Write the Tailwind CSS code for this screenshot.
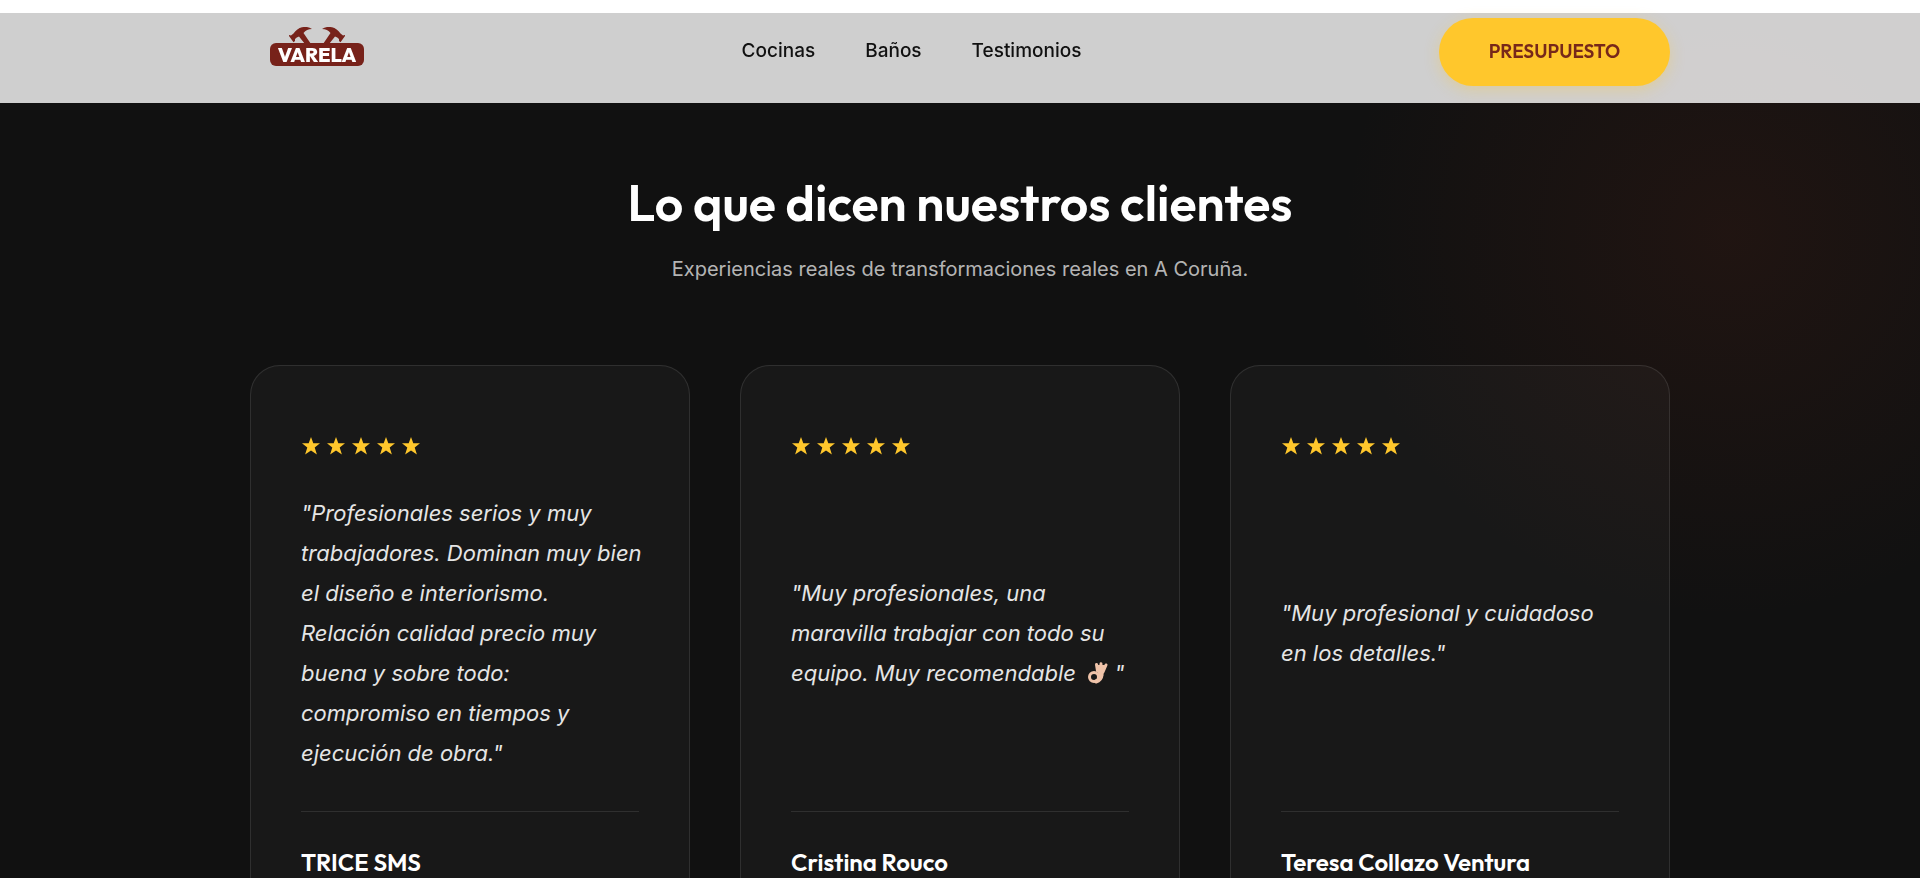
<!DOCTYPE html>
<html lang="es">
<head>
    <meta charset="UTF-8">
    <meta name="viewport" content="width=device-width, initial-scale=1.0">
    <title>Varela | Testimonios</title>
    <script src="https://cdn.jsdelivr.net/npm/@tailwindcss/browser@4"></script>
</head>
<body class="bg-white font-['Inter',sans-serif] text-[#111]">
    <!-- Shared shapes -->
    <svg class="hidden" aria-hidden="true">
        <symbol id="star" viewBox="0 0 18 18">
            <path d="M9 0l2.300 6.300H18l-5.300 4.200 2.200 7L9 13.400l-5.900 4.100 2.200-7L0 6.300h6.700z" fill="#ffc72c"/>
        </symbol>
    </svg>

    <header class="fixed inset-x-0 top-0 z-10 bg-white/80">
        <div class="mx-auto flex h-[103px] max-w-[1500px] items-center justify-between px-10">
            <a href="#" class="flex w-[134px] justify-center pb-2.5" aria-label="Varela">
                <svg class="h-[40px] w-[94px]" viewBox="0 0 94 40">
                    <g fill="#77221a">
                        <path d="M19 8 L21 8.500 L23.500 6.500 Q27 1.500 32 0.300 Q38 -1 42 2 Q36.500 2 33.500 6 L41 17 H35 L29 9.500 Q26.500 10 25 12 L25 14 L23.500 15.200 L19 9z"/>
                        <path d="M75 8 L73 8.500 L70.500 6.500 Q67 1.500 62 0.300 Q56 -1 52 2 Q57.500 2 60.500 6 L53 17 H59 L65 9.500 Q67.500 10 69 12 L69 14 L70.500 15.200 L75 9z"/>
                        <rect x="0" y="16" width="94" height="23" rx="6"/>
                    </g>
                    <text x="47" y="34.500" text-anchor="middle" font-family="Outfit, sans-serif" font-weight="800" font-size="20" fill="#fff">VARELA</text>
                </svg>
            </a>
            <nav class="flex gap-[50px] text-[19px] font-medium">
                <a href="#cocinas">Cocinas</a>
                <a href="#banos">Baños</a>
                <a href="#testimonios">Testimonios</a>
            </nav>
            <a href="#presupuesto" class="flex h-[68px] w-[231px] items-center justify-center rounded-full bg-[#ffc72c] font-['Outfit','Lato',sans-serif] text-[19px] font-semibold text-[#77281a] shadow-[0_4px_15px_rgba(255,199,44,0.3)]">PRESUPUESTO</a>
        </div>
    </header>

    <main class="pt-[13px]">
        <section id="testimonios" class="relative overflow-hidden bg-[#111] pt-40 pb-40 text-white">
            <div class="absolute top-[-164px] right-[-10%] size-[768px] bg-[radial-gradient(circle_closest-side,rgba(119,40,20,0.15),transparent)]"></div>

            <div class="relative mx-auto max-w-[1500px] px-10">
                <div class="mb-20 text-center">
                    <h2 class="font-['Outfit','Lato',sans-serif] text-[50px] leading-[60px] font-semibold">Lo que dicen nuestros clientes</h2>
                    <p class="mt-5 text-xl leading-8 text-white/70">Experiencias reales de transformaciones reales en A Coruña.</p>
                </div>

                <div class="grid grid-cols-3 gap-[50px]">
                    <article class="flex flex-col rounded-[30px] border border-white/10 bg-white/3 px-[50px] pt-[71px] pb-[60px]">
                        <div class="flex gap-[7px] pl-px" role="img" aria-label="5 de 5 estrellas">
                            <svg class="size-[18px]"><use href="#star"/></svg>
                            <svg class="size-[18px]"><use href="#star"/></svg>
                            <svg class="size-[18px]"><use href="#star"/></svg>
                            <svg class="size-[18px]"><use href="#star"/></svg>
                            <svg class="size-[18px]"><use href="#star"/></svg>
                        </div>
                        <div class="-mr-1 my-[38px] flex flex-1 items-center">
                            <p class="text-[22px] leading-10 text-[#e5e5e5] italic">"Profesionales serios y muy trabajadores. Dominan muy bien el diseño e interiorismo. Relación calidad precio muy buena y sobre todo: compromiso en tiempos y ejecución de obra."</p>
                        </div>
                        <h3 class="border-t border-white/10 pt-[34px] font-['Outfit','Lato',sans-serif] text-2xl font-semibold">TRICE SMS</h3>
                    </article>

                    <article class="flex flex-col rounded-[30px] border border-white/10 bg-white/3 px-[50px] pt-[71px] pb-[60px]">
                        <div class="flex gap-[7px] pl-px" role="img" aria-label="5 de 5 estrellas">
                            <svg class="size-[18px]"><use href="#star"/></svg>
                            <svg class="size-[18px]"><use href="#star"/></svg>
                            <svg class="size-[18px]"><use href="#star"/></svg>
                            <svg class="size-[18px]"><use href="#star"/></svg>
                            <svg class="size-[18px]"><use href="#star"/></svg>
                        </div>
                        <div class="-mr-1 my-[38px] flex flex-1 items-center">
                            <p class="text-[22px] leading-10 text-[#e5e5e5] italic">"Muy profesionales, una maravilla trabajar con todo su equipo. Muy recomendable
                                <svg class="inline h-[22px] w-[32px] align-[-3px]" viewBox="-2 0 32 22" role="img" aria-label="👌🏼">
                                    <g fill="none" stroke="#efc3a9" stroke-linecap="round">
                                        <path d="M13.500 9 L12.500 2.500" stroke-width="3"/>
                                        <path d="M16.500 9 L17 1.800" stroke-width="3"/>
                                        <path d="M19 10 L22 3" stroke-width="3"/>
                                        <path d="M17.500 13 Q17 18 12 19.500" stroke-width="4"/>
                                        <circle cx="10" cy="15" r="4.500" stroke-width="3"/>
                                    </g>
                                    <path d="M13 3 H21 L19.500 12 Q19 16 15 18.500 L14 11z" fill="#efc3a9"/>
                                </svg>"</p>
                        </div>
                        <h3 class="border-t border-white/10 pt-[34px] font-['Outfit','Lato',sans-serif] text-2xl font-semibold">Cristina Rouco</h3>
                    </article>

                    <article class="flex flex-col rounded-[30px] border border-white/10 bg-white/3 px-[50px] pt-[71px] pb-[60px]">
                        <div class="flex gap-[7px] pl-px" role="img" aria-label="5 de 5 estrellas">
                            <svg class="size-[18px]"><use href="#star"/></svg>
                            <svg class="size-[18px]"><use href="#star"/></svg>
                            <svg class="size-[18px]"><use href="#star"/></svg>
                            <svg class="size-[18px]"><use href="#star"/></svg>
                            <svg class="size-[18px]"><use href="#star"/></svg>
                        </div>
                        <div class="-mr-1 my-[38px] flex flex-1 items-center">
                            <p class="text-[22px] leading-10 text-[#e5e5e5] italic">"Muy profesional y cuidadoso en&nbsp;los detalles."</p>
                        </div>
                        <h3 class="border-t border-white/10 pt-[34px] font-['Outfit','Lato',sans-serif] text-2xl font-semibold">Teresa Collazo Ventura</h3>
                    </article>
                </div>
            </div>
        </section>
    </main>
</body>
</html>
